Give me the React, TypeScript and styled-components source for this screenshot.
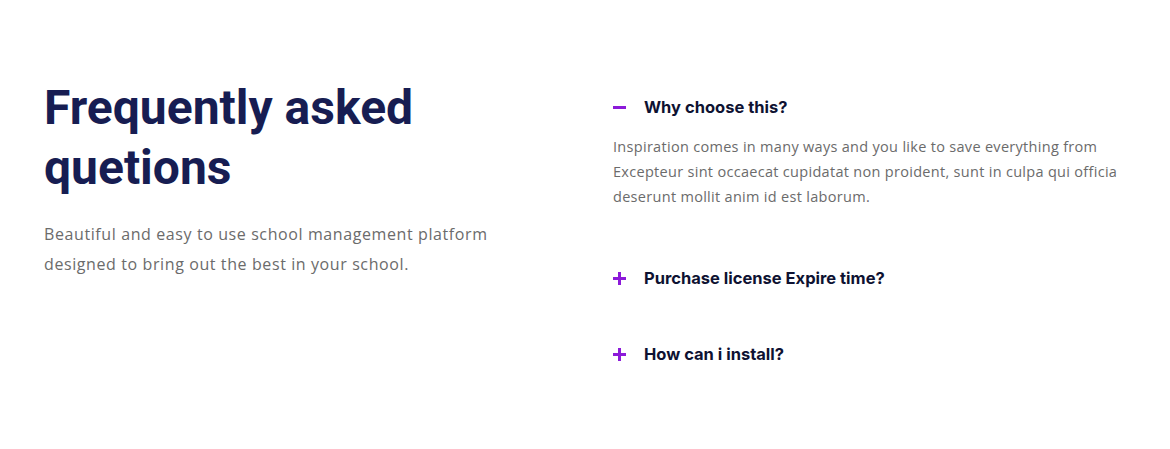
import React, { useState } from "react";
import styled, { createGlobalStyle } from "styled-components";

const GlobalStyle = createGlobalStyle`
  html, body { margin: 0; padding: 0; background: #ffffff; }
  * { box-sizing: border-box; }
`;

const Section = styled.section`
  width: 1170px;
  height: 449px;
  padding: 78px 44px 0 44px;
  display: grid;
  grid-template-columns: 569px 1fr;
  background: #fff;
`;

const Intro = styled.div`
  display: flex;
  flex-direction: column;
`;

const Title = styled.h2`
  margin: 0;
  font-family: Roboto, "Liberation Sans", sans-serif;
  font-weight: 700;
  font-size: 48px;
  line-height: 60px;
  color: #171d52;
  width: 440px;
`;

const Lead = styled.p`
  margin: 21px 0 0 0;
  font-family: "Open Sans", "Liberation Sans", sans-serif;
  font-size: 16px;
  letter-spacing: 0.6px;
  line-height: 30px;
  color: #6b6b6b;
  width: 480px;
`;

const List = styled.div`
  display: flex;
  flex-direction: column;
  padding-top: 12px;
`;

const Item = styled.div`
  display: flex;
  flex-direction: column;
  margin-bottom: 42px;
`;

const Question = styled.button`
  display: flex;
  align-items: center;
  gap: 18px;
  padding: 0;
  border: 0;
  background: none;
  cursor: pointer;
  text-align: left;
  height: 34px;
  font-family: Inter, "Liberation Sans", sans-serif;
  font-weight: 700;
  font-size: 16.5px;
  color: #0e1232;
`;

const Icon = styled.span<{ $open: boolean }>`
  position: relative;
  width: 13px;
  height: 13px;
  flex: none;
  &::before, &::after {
    content: "";
    position: absolute;
    background: #8c1ad9;
  }
  &::before {
    left: 0; right: 0; top: 5px; height: 3px;
  }
  &::after {
    top: 0; bottom: 0; left: 5px; width: 3px;
    display: ${(p) => (p.$open ? "none" : "block")};
  }
`;

const Answer = styled.p`
  margin: 10px 0 10px 0;
  font-family: "Open Sans", "Liberation Sans", sans-serif;
  font-size: 14.5px;
  letter-spacing: 0.3px;
  line-height: 25px;
  color: #6b6b6b;
  width: 530px;
`;

const faqs = [
  {
    q: "Why choose this?",
    a: "Inspiration comes in many ways and you like to save everything from Excepteur sint occaecat cupidatat non proident, sunt in culpa qui officia deserunt mollit anim id est laborum.",
  },
  { q: "Purchase license Expire time?", a: "Inspiration comes in many ways and you like to save everything from Excepteur sint occaecat cupidatat non proident, sunt in culpa qui officia deserunt mollit anim id est laborum." },
  { q: "How can i install?", a: "Inspiration comes in many ways and you like to save everything from Excepteur sint occaecat cupidatat non proident, sunt in culpa qui officia deserunt mollit anim id est laborum." },
];

export default function App() {
  const [open, setOpen] = useState(0);
  return (
    <>
      <GlobalStyle />
      <Section>
        <Intro>
          <Title>Frequently asked quetions</Title>
          <Lead>
            Beautiful and easy to use school management platform designed to bring out the best in your school.
          </Lead>
        </Intro>
        <List>
          {faqs.map((f, i) => (
            <Item key={f.q}>
              <Question onClick={() => setOpen(open === i ? -1 : i)}>
                <Icon $open={open === i} />
                {f.q}
              </Question>
              {open === i && <Answer>{f.a}</Answer>}
            </Item>
          ))}
        </List>
      </Section>
    </>
  );
}
